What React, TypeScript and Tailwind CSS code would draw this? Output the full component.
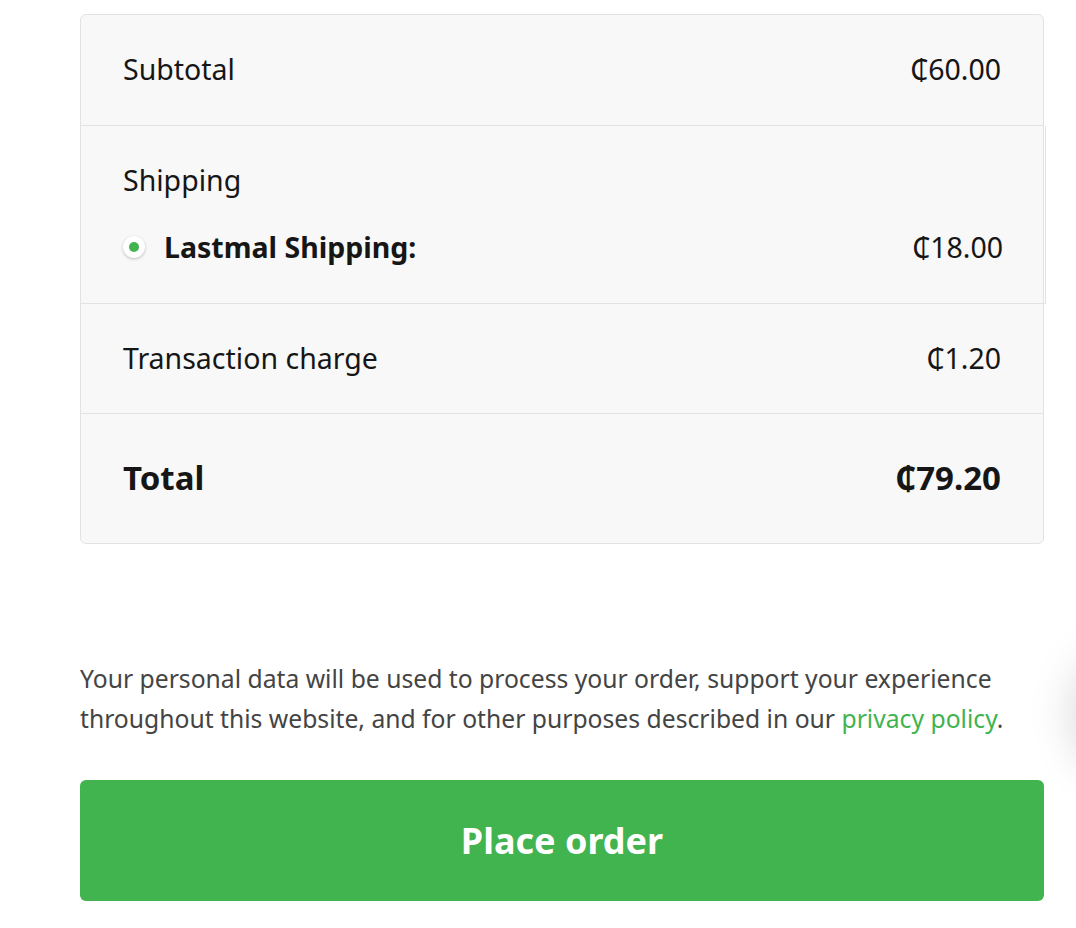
import React from "react";

const rows = [
  { label: "Subtotal", value: "₵60.00" },
  { label: "Transaction charge", value: "₵1.20" },
];

function Radio() {
  return (
    <span className="flex items-center justify-center w-[22px] h-[22px] rounded-full bg-white shadow-[0_1px_3px_rgba(0,0,0,0.25)]">
      <span className="w-[10px] h-[10px] rounded-full bg-[#41b34f]" />
    </span>
  );
}

export default function App() {
  return (
    <div
      className="relative w-[1076px] h-[928px] overflow-hidden bg-white text-[#161616]"
      style={{ fontFamily: '"Noto Sans", "DejaVu Sans", sans-serif' }}
    >
      <div className="ml-[80px] mt-[14px] w-[964px]">
        {/* Order totals */}
        <div className="rounded-[6px] border border-[#e2e2e2] bg-[#f8f8f8] text-[28.5px] leading-[40px]">
          <div className="flex justify-between px-[42px] pt-[34px] pb-[36px] border-b border-[#e2e2e2]">
            <span>{rows[0].label}</span>
            <span>{rows[0].value}</span>
          </div>

          <div className="-mr-[3px] pl-[42px] pr-[42px] pt-[34px] pb-[36px] border-b border-r border-[#e2e2e2]">
            <div>Shipping</div>
            <div className="mt-[27px] flex items-center justify-between">
              <div className="flex items-center gap-[19px]">
                <Radio />
                <span className="font-bold">Lastmal Shipping:</span>
              </div>
              <span>₵18.00</span>
            </div>
          </div>

          <div className="flex justify-between px-[42px] pt-[34px] pb-[35px] border-b border-[#e2e2e2]">
            <span>{rows[1].label}</span>
            <span>{rows[1].value}</span>
          </div>

          <div className="flex justify-between px-[42px] pt-[44px] pb-[46px] text-[33px] leading-[39px] font-bold">
            <span>Total</span>
            <span>₵79.20</span>
          </div>
        </div>

        <p className="mt-[115px] text-[24.7px] leading-[40px] text-[#444] whitespace-nowrap">
          Your personal data will be used to process your order, support your experience
          <br />
          throughout this website, and for other purposes described in our{" "}
          <a className="text-[#41b34f]">privacy policy</a>.
        </p>

        <button className="mt-[41px] w-full h-[121px] rounded-[6px] bg-[#41b34f] text-white text-[36px] font-bold">
          Place order
        </button>
      </div>

      {/* floating widget edge, mostly off screen */}
      <div className="absolute left-[1076px] top-[648px] w-[130px] h-[130px] rounded-full bg-white shadow-[0_0_48px_rgba(0,0,0,0.18)]" />
    </div>
  );
}
